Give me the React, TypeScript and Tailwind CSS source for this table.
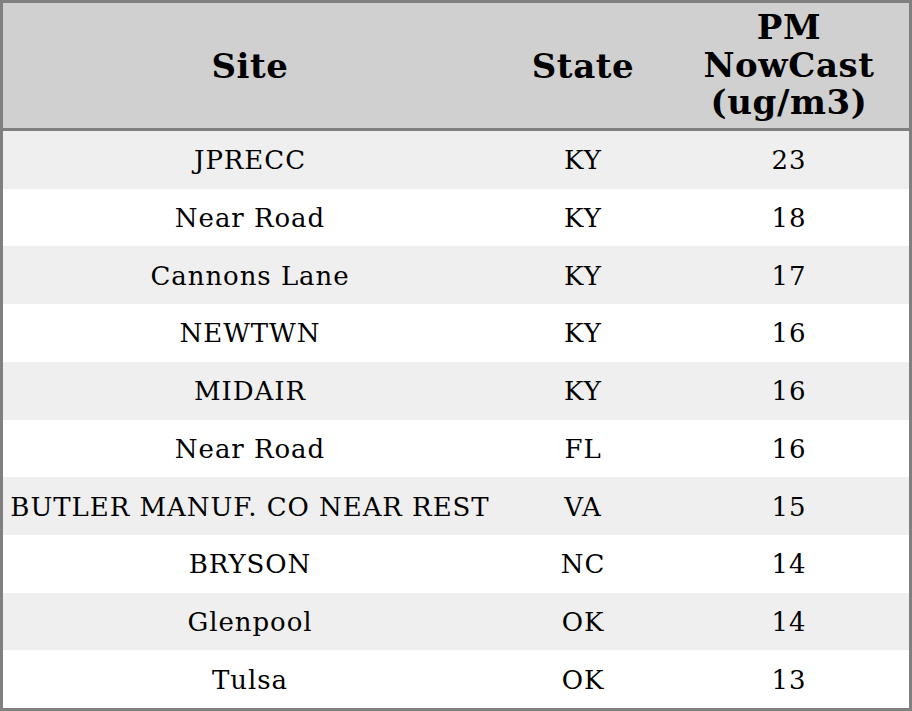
import React from 'react';

const rows = [
  { site: 'JPRECC', state: 'KY', pm: 23 },
  { site: 'Near Road', state: 'KY', pm: 18 },
  { site: 'Cannons Lane', state: 'KY', pm: 17 },
  { site: 'NEWTWN', state: 'KY', pm: 16 },
  { site: 'MIDAIR', state: 'KY', pm: 16 },
  { site: 'Near Road', state: 'FL', pm: 16 },
  { site: 'BUTLER MANUF. CO NEAR REST', state: 'VA', pm: 15 },
  { site: 'BRYSON', state: 'NC', pm: 14 },
  { site: 'Glenpool', state: 'OK', pm: 14 },
  { site: 'Tulsa', state: 'OK', pm: 13 },
];

export default function App() {
  return (
    <div
      className="w-[912px] h-[711px] bg-white border-[3px] border-[#808080] flex flex-col text-black"
      style={{ fontFamily: '"DejaVu Serif", serif' }}
    >
      <div className="grid grid-cols-[494px_172px_240px] h-[128px] shrink-0 bg-[#d0d0d0] border-b-[3px] border-[#808080] text-[34px] font-bold leading-[37.5px] tracking-[0.6px] text-center">
        <div className="flex items-center justify-center pt-[2px]">Site</div>
        <div className="flex items-center justify-center pt-[2px]">State</div>
        <div className="flex items-center justify-center">
          PM
          <br />
          NowCast
          <br />
          (ug/m3)
        </div>
      </div>
      <div className="flex-1 flex flex-col">
        {rows.map((r, i) => (
          <div
            key={i}
            className={`flex-1 grid grid-cols-[494px_172px_240px] items-center pt-[2px] text-center text-[26px] tracking-[0.95px] ${
              i % 2 === 0 ? 'bg-[#efefef]' : 'bg-white'
            }`}
          >
            <div>{r.site}</div>
            <div>{r.state}</div>
            <div>{r.pm}</div>
          </div>
        ))}
      </div>
    </div>
  );
}
